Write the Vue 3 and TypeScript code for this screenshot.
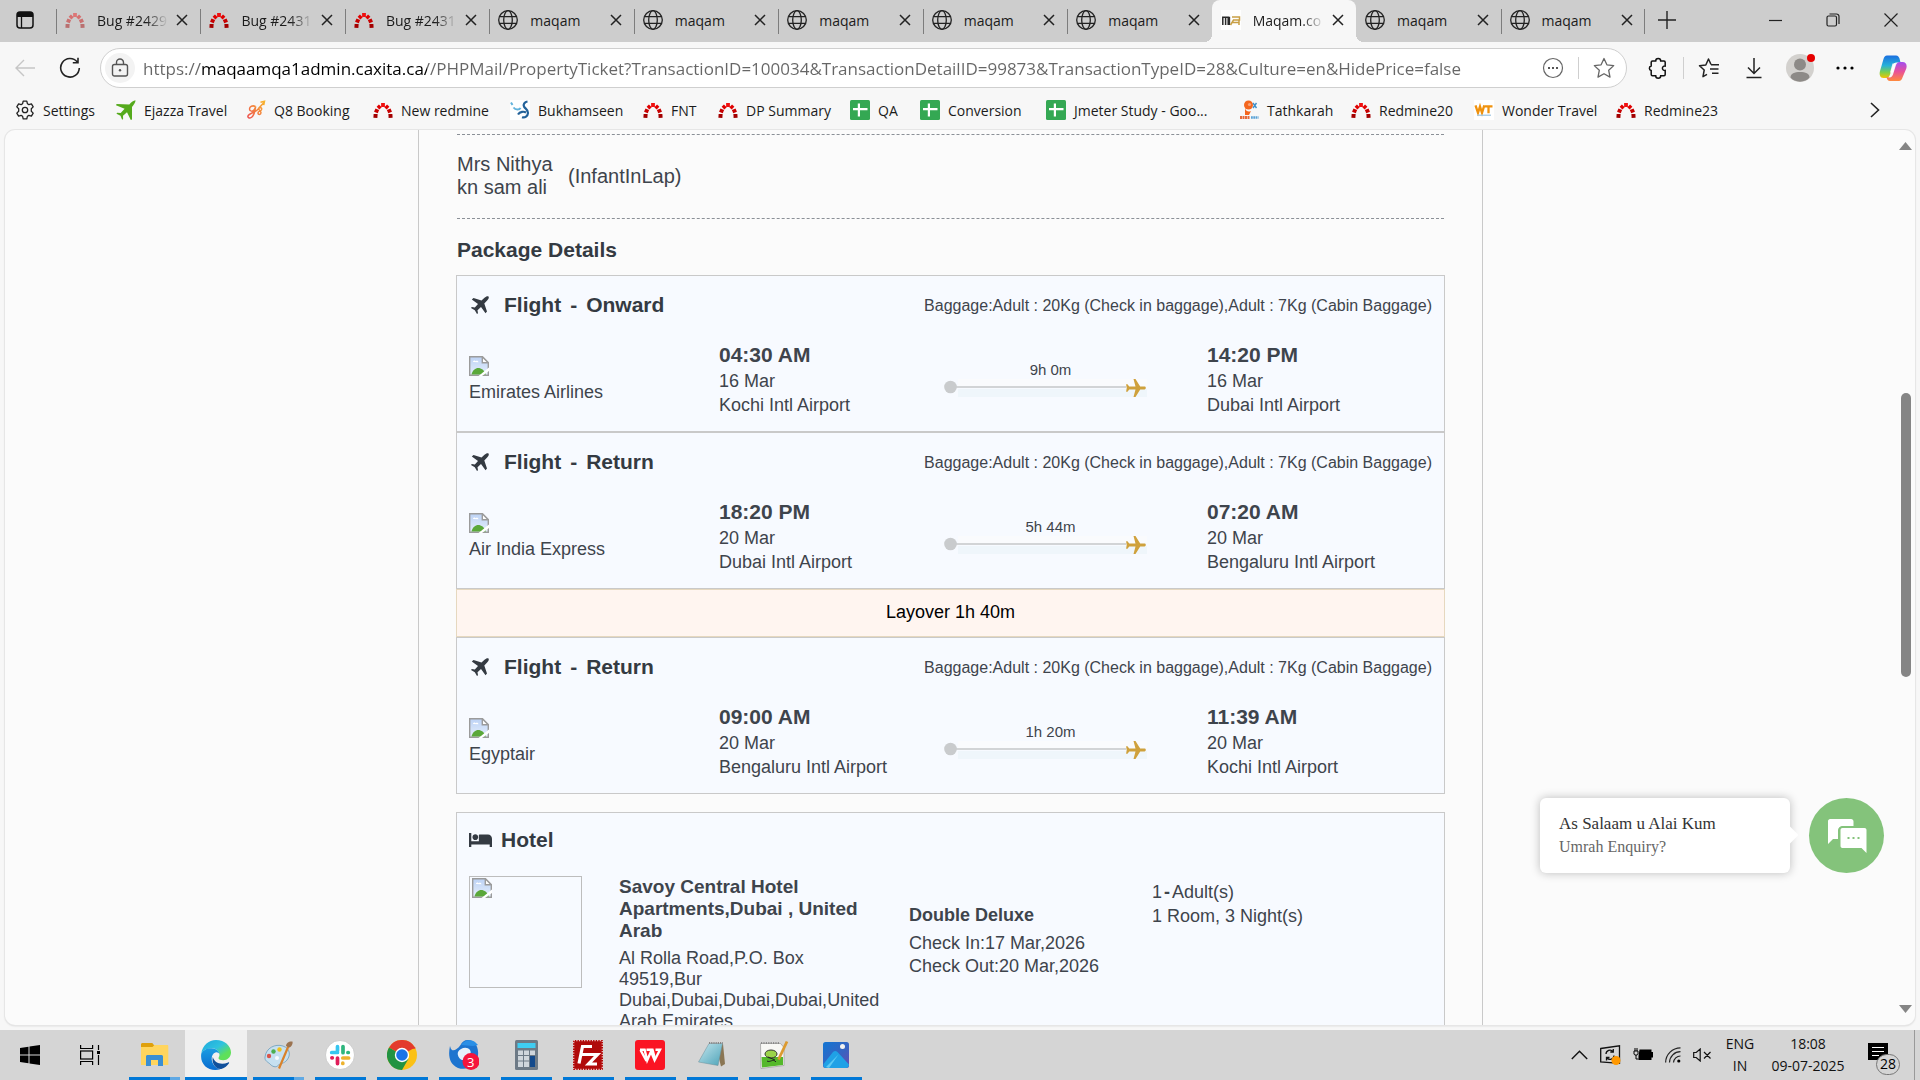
<script setup lang="ts">
interface Tab { title: string; icon: string; faded?: boolean; active?: boolean }
interface Bookmark { label: string; icon: string }
interface Stop { time: string; date: string; place: string }
interface Flight { title: string; airline: string; duration: string; from: Stop; to: Stop; layover?: string }
interface TaskApp { name: string; icon: string; active?: boolean; stacked?: boolean }

const tabs: Tab[] = [
  { title: 'Bug #2429', icon: 'redmine', faded: true },
  { title: 'Bug #2431', icon: 'redmine' },
  { title: 'Bug #2431', icon: 'redmine' },
  { title: 'maqam', icon: 'globe' },
  { title: 'maqam', icon: 'globe' },
  { title: 'maqam', icon: 'globe' },
  { title: 'maqam', icon: 'globe' },
  { title: 'maqam', icon: 'globe' },
  { title: 'Maqam.co', icon: 'maqam', active: true },
  { title: 'maqam', icon: 'globe' },
  { title: 'maqam', icon: 'globe' },
]

const url = 'https://maqaamqa1admin.caxita.ca//PHPMail/PropertyTicket?TransactionID=100034&TransactionDetailID=99873&TransactionTypeID=28&Culture=en&HidePrice=false'

const bookmarks: Bookmark[] = [
  { label: 'Settings', icon: 'gear' },
  { label: 'Ejazza Travel', icon: 'ejazza' },
  { label: 'Q8 Booking', icon: 'q8' },
  { label: 'New redmine', icon: 'redmine' },
  { label: 'Bukhamseen', icon: 'bukh' },
  { label: 'FNT', icon: 'redmine' },
  { label: 'DP Summary', icon: 'redmine' },
  { label: 'QA', icon: 'sheet' },
  { label: 'Conversion', icon: 'sheet' },
  { label: 'Jmeter Study - Goo...', icon: 'sheet' },
  { label: 'Tathkarah', icon: 'tath' },
  { label: 'Redmine20', icon: 'redmine' },
  { label: 'Wonder Travel', icon: 'wt' },
  { label: 'Redmine23', icon: 'redmine' },
]

const baggage = 'Baggage:Adult : 20Kg (Check in baggage),Adult : 7Kg (Cabin Baggage)'

const flights: Flight[] = [
  {
    title: 'Onward', airline: 'Emirates Airlines', duration: '9h 0m',
    from: { time: '04:30 AM', date: '16 Mar', place: 'Kochi Intl Airport' },
    to: { time: '14:20 PM', date: '16 Mar', place: 'Dubai Intl Airport' },
  },
  {
    title: 'Return', airline: 'Air India Express', duration: '5h 44m', layover: 'Layover 1h 40m',
    from: { time: '18:20 PM', date: '20 Mar', place: 'Dubai Intl Airport' },
    to: { time: '07:20 AM', date: '20 Mar', place: 'Bengaluru Intl Airport' },
  },
  {
    title: 'Return', airline: 'Egyptair', duration: '1h 20m',
    from: { time: '09:00 AM', date: '20 Mar', place: 'Bengaluru Intl Airport' },
    to: { time: '11:39 AM', date: '20 Mar', place: 'Kochi Intl Airport' },
  },
]

const apps: TaskApp[] = [
  { name: 'File Explorer', icon: 'explorer', stacked: true },
  { name: 'Edge', icon: 'edge', active: true },
  { name: 'Paint', icon: 'paint', stacked: true },
  { name: 'Slack', icon: 'slack' },
  { name: 'Chrome', icon: 'chrome' },
  { name: 'Thunderbird', icon: 'bird' },
  { name: 'Calculator', icon: 'calc' },
  { name: 'FileZilla', icon: 'fz' },
  { name: 'WPS Office', icon: 'wps' },
  { name: 'Notepad', icon: 'notepad' },
  { name: 'Notepad++', icon: 'npp' },
  { name: 'Photos', icon: 'photos' },
]
</script>

<template>
  <div class="desktop">
    <svg class="defs" aria-hidden="true">
      <defs>
        <linearGradient id="g-edge" x1="0" y1="0" x2="1" y2="1"><stop offset="0" stop-color="#1ea7dd" /><stop offset=".45" stop-color="#2fc2df" /><stop offset=".75" stop-color="#5fe05a" /></linearGradient>
        <linearGradient id="g-edge2" x1="0" y1="0" x2="0" y2="1"><stop offset="0" stop-color="#1b9de2" /><stop offset="1" stop-color="#0a6cd0" /></linearGradient>
        <linearGradient id="g-photo" x1="0" y1="0" x2="1" y2="1"><stop offset="0" stop-color="#1276d3" /><stop offset=".6" stop-color="#3a62c0" /><stop offset="1" stop-color="#6a4bb0" /></linearGradient>
        <linearGradient id="g-note" x1="0" y1="0" x2="1" y2="1"><stop offset="0" stop-color="#c4e6ee" /><stop offset="1" stop-color="#4da3b8" /></linearGradient>
        <linearGradient id="g-cop1" x1="0" y1="0" x2="0" y2="1"><stop offset="0" stop-color="#1b6fe0" /><stop offset=".45" stop-color="#27b2d8" /><stop offset=".75" stop-color="#7fd04a" /><stop offset="1" stop-color="#f4c400" /></linearGradient>
        <linearGradient id="g-cop2" x1="0" y1="0" x2="0" y2="1"><stop offset="0" stop-color="#a24ff0" /><stop offset=".5" stop-color="#e8519a" /><stop offset="1" stop-color="#ff8a3c" /></linearGradient>
        <linearGradient id="g-q8" x1="0" y1="1" x2="1" y2="0"><stop offset="0" stop-color="#ee4f4f" /><stop offset="1" stop-color="#f8b62c" /></linearGradient>
        <linearGradient id="g-sky" x1="0" y1="0" x2="0" y2="1"><stop offset="0" stop-color="#bcd2f5" /><stop offset="1" stop-color="#e6effc" /></linearGradient>
      </defs>
      <symbol id="i-redmine" viewBox="0 0 20 20">
        <g fill="none" stroke-width="4">
          <path d="M2.4 17.9 2.6 14" stroke="#a30000" /><path d="M2.9 12.6 4.3 9.2" stroke="#c80000" />
          <path d="M5 8.1 7.3 5.9" stroke="#e00000" /><path d="M8.1 5h3.8" stroke="#f01010" />
          <path d="M12.7 5.9 15 8.1" stroke="#e00000" /><path d="M15.7 9.2 17.1 12.6" stroke="#c80000" /><path d="M17.4 14 17.6 17.9" stroke="#a30000" />
        </g>
      </symbol>
      <symbol id="i-globe" viewBox="0 0 20 20">
        <g fill="none" stroke="#222" stroke-width="1.3"><circle cx="10" cy="10" r="9.3" /><ellipse cx="10" cy="10" rx="4.3" ry="9.3" /><path d="M1.5 6.7h17M1.5 13.3h17" /></g>
      </symbol>
      <symbol id="i-maqam" viewBox="0 0 20 20">
        <rect width="20" height="20" fill="#fff" />
        <path d="M1.8 15V7.2h5.4V15M4.6 7.2V15M8.4 15V6.8" fill="none" stroke="#2b2b2b" stroke-width="1.5" />
        <path d="M9.5 15l3-5h6v-3h-7.5M18 10v5M11.5 12.5h6.5" fill="none" stroke="#c9a045" stroke-width="1.5" />
      </symbol>
      <symbol id="i-gear" viewBox="0 0 20 20">
        <path d="M8.2 1.2h3.6l.6 2.5 1.5.9 2.5-.8 1.8 3.1-1.9 1.8v2.6l1.9 1.8-1.8 3.1-2.5-.8-1.5.9-.6 2.5H8.2l-.6-2.5-1.5-.9-2.5.8-1.8-3.1 1.9-1.8V8.7L1.8 6.9l1.8-3.1 2.5.8 1.5-.9z" fill="none" stroke="#222" stroke-width="1.3" stroke-linejoin="round" />
        <circle cx="10" cy="10" r="2.7" fill="none" stroke="#222" stroke-width="1.3" />
      </symbol>
      <symbol id="i-ejazza" viewBox="0 0 20 20"><path d="M19.5.3c-2 .2-4 1.9-6.2 4.2L.6 4.1 0 5.3l8.6 3.5-3.9 4.3-3.6-.3-.6 1 4 1.9 1.6 4 1-.6-.1-3.3 4-3.6L14.8 20l1.2-.6V6.9c1.9-2.3 3.5-4.3 3.5-6.6z" fill="#55aa1c" /></symbol>
      <symbol id="i-q8" viewBox="0 0 20 20">
        <path d="M9.5 6.5c-3-1.500-6 0-6 2.500s3.500 3 5 .5l1.200-3c-.5 4-1.500 9-4.500 11-2 1.300-4-.2-3-2 1.500-2.500 7-2.500 10.500-7 1.500-1.800 3.500-.5 2.800 1.200-.8 1.700-3.500 1.300-3.500 3.300s2.800 1.800 3-.2c.2-1.800-2.500-2-2.200-4.600L18 2.500M14.500 2.200l4-1-.8 4" fill="none" stroke="url(#g-q8)" stroke-width="1.500" />
      </symbol>
      <symbol id="i-bukh" viewBox="0 0 20 20">
        <rect width="20" height="20" fill="#fff" />
        <path d="M1 2.500 2.500 5M3.500 7.500c2 2.500 6 2.500 7 .3" fill="none" stroke="#62b3dc" stroke-width="2" />
        <path d="M17.500 1.500c-3 .5-4.500 3-3.500 5 1 2.300 4.200 3 4 6.500-.2 3-3 5.200-6 4.200M8 14.500c2-3.200 6-3.200 8-2" fill="none" stroke="#25639a" stroke-width="2.200" />
      </symbol>
      <symbol id="i-sheet" viewBox="0 0 20 20"><rect width="20" height="20" rx="1.500" fill="#34a853" /><path d="M8.900 3.500v13M3 9.200h14.500" stroke="#fff" stroke-width="2.200" /></symbol>
      <symbol id="i-tath" viewBox="0 0 20 20">
        <circle cx="9.500" cy="5" r="4.500" fill="#f4661e" /><path d="M6 8c1 4 4 4 6 3l-2 4H6z" fill="#f4661e" /><circle cx="10.500" cy="4.500" r="1.600" fill="#fff" opacity=".4" />
        <path d="M14 3l3.500 5M17.500 3 14 8" stroke="#3e8fc9" stroke-width="1.400" /><path d="M1 17.500h10" stroke="#e66a3a" stroke-width="3" stroke-dasharray="2 .5" /><path d="M12 17.500h7.500" stroke="#5aa2d6" stroke-width="2.500" stroke-dasharray="1.800 .5" />
      </symbol>
      <symbol id="i-wt" viewBox="0 0 20 20">
        <rect width="20" height="20" fill="#fff" />
        <path d="M1.500 5.300 4 12.800 6 6.500l2 6.300 2.300-7.500M10.500 6.300h8M14.500 6.300v7" fill="none" stroke="#f0920e" stroke-width="2.300" /><path d="M3 15.200h14" stroke="#9cc4e0" stroke-width="1.200" />
      </symbol>
      <symbol id="i-broken" viewBox="0 0 20 20">
        <path d="M.7.7h12.600L19.300 6.700v12.600H.7z" fill="url(#g-sky)" stroke="#9b9b9b" stroke-width="1.400" />
        <path d="M4 6c0-1.500 2-2 2.500-.8C8 4.200 9.500 5 9.500 6.200z" fill="#fff" /><path d="M2.500 18.600c2-8.500 11-9 14.500 0z" fill="#5aa83a" />
        <path d="M13.300.7v6h6z" fill="#fff" stroke="#9b9b9b" stroke-width="1.400" /><path d="M20 11.500 9.500 20H13l7-5z" fill="#fff" />
      </symbol>
      <symbol id="i-plane" viewBox="0 0 18 18"><path d="M17.500.5c-1-.8-2.600 0-4 1.300l-3 2.800L2.500 2 .8 3.500 7 8l-3.200 3.500-3-.5L0 12l3.800 2.200L6 18l1-.8-.5-3L10 11l4.500 6.300 1.500-1.800-2.700-8 2.800-3c1.300-1.400 2.200-3 1.400-4z" fill="#343a42" /></symbol>
      <symbol id="i-bed" viewBox="0 64 640 384"><path d="M176 256c44 0 80-36 80-80s-36-80-80-80-80 36-80 80 36 80 80 80zm352-150H290c-9 0-16 7-16 16v166H64V64H0v384h64v-64h512v64h64V218c0-62-50-112-112-112z" fill="#343a42" /></symbol>

      <symbol id="i-explorer" viewBox="0 0 30 30"><path d="M2 4.500C2 3.600 2.600 3 3.500 3h9.800l2 2.500H27V9H2z" fill="#dfa00c" /><path d="M2 7h11.500l2-2H28.300c.6 0 1 .5 1 1V25H2z" fill="#ffd55e" /><path d="M7 26v-9.500c0-1 .8-1.500 1.500-1.500h14c1 0 1.500.8 1.500 1.500V26h-5v-6h-7v6z" fill="#3b8fd3" /></symbol>
      <symbol id="i-edge" viewBox="0 0 30 30">
        <path d="M.3 13.500C1.500 5.500 7.500 0 15 0c8.800 0 15 6 15 12.500 0 4.500-3.500 7.700-7.800 7.700-2.600 0-4.700-.8-4.700-2 0-1 1-1.500 1-3.400 0-3-3-6.600-8-6.600C5.500 8.200 2 10.500.3 13.500z" fill="url(#g-edge)" />
        <path d="M.3 13.500C2 10 6 8 10.500 8.200c4 .2 7.500 2.500 8 6-.8-1.400-2.500-2.200-4-1.700-3 1-4.500 4.500-3.500 8.500 1 4.200 4.500 7.500 8.500 8.200C8 32.500-1.500 24.500.3 13.500z" fill="url(#g-edge2)" />
        <path d="M11.800 17c-1.500 6.500 3 12.500 8.500 12 3.500-1 6-3.200 7.700-5.800.4-.6-.1-1.100-.8-.8C20 25.500 13.500 23 11.800 17z" fill="#10509c" />
      </symbol>
      <symbol id="i-paint" viewBox="0 0 30 30">
        <path d="M2 17C3 8 12 3.500 20 6c7 2.500 8 9 4 14-3 4-7 3-9 5.500-2 2.500-6 1-8-1.500-2-2-5.500-3-5-7z" fill="#c6e0f0" stroke="#7fa9c4" />
        <circle cx="6" cy="16" r="2.200" fill="#d9534a" /><circle cx="10.500" cy="11.500" r="2.200" fill="#4caf50" /><circle cx="16.500" cy="9.500" r="2.200" fill="#f2c21c" /><circle cx="14" cy="18" r="2" fill="#f8fbfd" />
        <path d="M16 28.500 25.500 6" stroke="#d9822b" stroke-width="2.200" /><path d="M23 6c0-3 3-5 6.500-4.500C30 4 28.500 7 26 7.500z" fill="#9b7350" />
      </symbol>
      <symbol id="i-slack" viewBox="0 0 30 30"><circle cx="15" cy="15" r="14.500" fill="#fff" stroke="#bbb" stroke-width=".6" />
        <g stroke-width="3.700" stroke-linecap="round"><path d="M12.500 6.700v4.200M6.700 12.500h5.800" stroke="#36c5f0" /><path d="M18 6.500v6.200M23.300 12.500h-.4" stroke="#2eb67d" /><path d="M17.800 18h5.800M17.800 23.200v.3" stroke="#ecb22e" /><path d="M12.500 18v5.600M6.900 17.800h.4" stroke="#e01e5a" /></g></symbol>
      <symbol id="i-chrome" viewBox="0 0 30 30"><circle cx="15" cy="15" r="15" fill="#fbc116" /><path d="M15 15 2 7.500A15 15 0 0 1 28 7.500z" fill="#e33b2e" /><path d="M2 7.500A15 15 0 0 0 15 30l6.500-11.300L15 15z" fill="#229342" /><path d="M15 8h13.300" stroke="#e33b2e" stroke-width="1.500" /><circle cx="15" cy="15" r="7.200" fill="#fff" /><circle cx="15" cy="15" r="5.800" fill="#1a73e8" /></symbol>
      <symbol id="i-bird" viewBox="0 0 30 30">
        <path d="M1 6c-2 9-1 18 8 22 9 3 20-2 20-13C30 6 25 0 19 0c-4 0-6 2-7.500 5C9 9 5 11 3 10c-1-1-1.500-2-2-4z" fill="#1d74cf" /><path d="M12 5c3-5 10-6 14-3l3 3-5 1z" fill="#2a8fe6" /><path d="M9 12c2-4 9-6 12-2 3 5-4 11-8 10-3-1-5-5-4-8z" fill="#e6f1fb" />
        <circle cx="22" cy="21.500" r="8.500" fill="#f5143c" />
      </symbol>
      <symbol id="i-calc" viewBox="0 0 30 30"><rect x="4" width="23" height="30" rx="1.500" fill="#6d7a86" /><rect x="6.500" y="3" width="18" height="5" fill="#3fcdf2" /><path d="M7 10.500h5v4.500H7zm6 0h5v4.500h-5zm6 0h5v4.500h-5zM7 16h5v4.500H7zm6 0h5v4.500h-5zM7 21.500h5V27H7zm6 0h5V27h-5z" fill="#cfd6dc" /><path d="M19 16h5v11h-5z" fill="#134a8c" /></symbol>
      <symbol id="i-fz" viewBox="0 0 30 30"><rect width="30" height="30" fill="#b00a0a" /><rect x=".7" y=".7" width="28.600" height="28.600" fill="none" stroke="#fff" stroke-width="1.200" stroke-dasharray="1.200 1.400" opacity=".8" /><path d="M6 23.500 9.500 6.500h9.500M8 14.500h8M16 14.500h8.500L15.500 24H24" fill="none" stroke="#fff" stroke-width="3.200" /></symbol>
      <symbol id="i-wps" viewBox="0 0 30 30"><rect width="30" height="30" rx="3" fill="#fa1423" /><path d="M5 9.700h4.600l2.600 10.500L16 11.500l3.600 8.700 5.400-10.500h-4.500" fill="none" stroke="#fff" stroke-width="2.400" /><path d="M5.500 10l6 11M11.500 9.700h6l2.500 9" fill="none" stroke="#fff" stroke-width="2.400" /></symbol>
      <symbol id="i-notepad" viewBox="0 0 30 30"><path d="M26 4l2 20-4 2.500L19 6z" fill="#8a7654" /><path d="M12 3.500h13.500L21 25.500 1.500 22z" fill="url(#g-note)" stroke="#6d8e98" stroke-width=".5" /><path d="M12 3h14" stroke="#888" stroke-width="2" stroke-dasharray="1.200 1" /></symbol>
      <symbol id="i-npp" viewBox="0 0 30 30"><path d="M1.500 3.500h20l3.500 4v18l-23 3z" fill="#f7f7f4" stroke="#999" stroke-width=".7" /><path d="M2.500 17H24v8L3 27.500z" fill="#54b82a" /><ellipse cx="12" cy="14" rx="6" ry="4" fill="#9bd44a" stroke="#333" /><path d="M8 21c3 2 6-3 9 1M9 17l7 3" fill="none" stroke="#222" /><path d="M19.500 19.500 28 1.500" stroke="#dc9a30" stroke-width="2.800" /><path d="M2 3h18" stroke="#777" stroke-width="1.500" stroke-dasharray="1.200 1.200" /></symbol>
      <symbol id="i-photos" viewBox="0 0 30 30"><rect x="2" y="2" width="26" height="26" rx="2.500" fill="url(#g-photo)" /><path d="M2.500 24 12 12c1.500-1.500 3-1.500 4.500 0L28 24.500c0 2-1 3.500-3 3.500H5c-2 0-3-2-2.500-4z" fill="#1fa1e6" /><path d="M8 28 17.500 14.500 5 27z" fill="#5ccaf5" /><circle cx="21.500" cy="6.500" r="2.500" fill="#f2f2f2" /></symbol>
    </svg>

    <header class="tabstrip">
      <button class="tab-actions" aria-label="Tab actions">
        <svg width="18" height="18" viewBox="0 0 18 18"><rect x="1" y="1" width="16" height="16" rx="3" fill="none" stroke="#111" stroke-width="1.500" /><path d="M1 6V4a3 3 0 0 1 3-3h10a3 3 0 0 1 3 3v2z" fill="#111" /><path d="M5.500 5v12" stroke="#111" stroke-width="1.300" /></svg>
      </button>
      <nav class="tabs">
        <div v-for="(t, i) in tabs" :key="i" class="tab" :class="{ active: t.active, 'no-line': i === 9 }">
          <svg class="favicon" :class="{ faded: t.faded }"><use :href="'#i-' + t.icon" /></svg>
          <span class="tab-title" :class="{ fade: t.icon !== 'globe' }">{{ t.title }}</span>
          <button class="tab-close" :aria-label="'Close ' + t.title"><svg width="12" height="12" viewBox="0 0 12 12"><path d="M1 1l10 10M11 1 1 11" stroke="#222" stroke-width="1.500" /></svg></button>
        </div>
      </nav>
      <div class="strip-end">
        <button aria-label="New tab"><svg width="18" height="18" viewBox="0 0 18 18"><path d="M9 0v18M0 9h18" stroke="#222" stroke-width="1.400" /></svg></button>
        <div class="window-buttons">
          <button aria-label="Minimise"><svg width="13" height="13" viewBox="0 0 13 13"><path d="M0 6.500h13" stroke="#222" stroke-width="1.200" /></svg></button>
          <button aria-label="Restore"><svg width="14" height="14" viewBox="0 0 14 14"><g fill="none" stroke="#222" stroke-width="1.200"><rect x="1" y="3" width="9.500" height="10" rx="1.500" /><path d="M3.500 1h7a2.500 2.500 0 0 1 2.500 2.500V11" /></g></svg></button>
          <button aria-label="Close window"><svg width="14" height="14" viewBox="0 0 14 14"><path d="M.5.5l13 13M13.500.5l-13 13" stroke="#222" stroke-width="1.200" /></svg></button>
        </div>
      </div>
    </header>

    <div class="toolbar">
      <button class="back" aria-label="Back"><svg width="20" height="18" viewBox="0 0 20 18"><path d="M9 1 1 9l8 8M1 9h19" fill="none" stroke="#c6c6c6" stroke-width="1.400" /></svg></button>
      <button class="reload" aria-label="Reload"><svg width="22" height="22" viewBox="0 0 22 22"><path d="M18.300 5A9.300 9.300 0 1 0 20.300 11M19 .8V5.800h-5.200" fill="none" stroke="#222" stroke-width="1.600" /></svg></button>
      <div class="address">
        <button class="lock" aria-label="Site information"><svg width="18" height="20" viewBox="0 0 18 20"><g fill="none" stroke="#555" stroke-width="1.400"><rect x="1.500" y="6.500" width="15" height="11.500" rx="2" /><path d="M5.500 6.500V4.500a3.500 3.500 0 0 1 7 0v2" /></g><circle cx="9" cy="12.200" r="1.200" fill="#555" /></svg></button>
        <input class="url" type="text" aria-label="Address" :value="url" />
        <button class="more-circle" aria-label="Page options"><svg width="22" height="22" viewBox="0 0 22 22"><circle cx="11" cy="11" r="9.500" fill="none" stroke="#666" stroke-width="1.200" /><path d="M6 11h2M10 11h2M14 11h2" stroke="#555" stroke-width="2" /></svg></button>
        <span class="bar"></span>
        <button aria-label="Add favourite"><svg width="22" height="22" viewBox="0 0 22 22"><path d="M11 1.500l2.900 6.300 6.800.8-5 4.700 1.300 6.800-6-3.400-6 3.400 1.300-6.800-5-4.700 6.800-.8z" fill="none" stroke="#666" stroke-width="1.300" stroke-linejoin="round" /></svg></button>
      </div>
      <div class="tools">
        <button aria-label="Extensions"><svg width="22" height="22" viewBox="0 0 22 22"><path d="M5.500 4h3.200a2.500 2.500 0 0 1 5 0H17c.8 0 1.200.5 1.200 1.200V9a2.300 2.300 0 1 0 0 4.500v4c0 .8-.5 1.200-1.200 1.200h-3.300a2.500 2.500 0 0 1-5 0H5.500c-.8 0-1.300-.5-1.300-1.200v-4a2.300 2.300 0 0 1 0-4.500V5.200C4.200 4.500 4.700 4 5.500 4z" fill="none" stroke="#111" stroke-width="1.500" /></svg></button>
        <span class="bar"></span>
        <button aria-label="Favourites"><svg width="22" height="22" viewBox="0 0 22 22"><path d="M13 7.500 10.500 2 7.800 8 1.500 8.700 6.200 13 5 19.700l4-2.300M13 7.700h8M12 12h8.500M14 16.300h6.500" fill="none" stroke="#222" stroke-width="1.500" stroke-linejoin="round" /></svg></button>
        <button aria-label="Downloads"><svg width="18" height="22" viewBox="0 0 18 22"><path d="M9 1v15.500M3 10.500l6 6 6-6M1.500 20.500h15" fill="none" stroke="#222" stroke-width="1.500" /></svg></button>
        <button class="avatar" aria-label="Profile"><svg width="30" height="30" viewBox="0 0 30 30"><circle cx="14" cy="15" r="14" fill="#d3d1ce" /><circle cx="14" cy="11.500" r="6" fill="#8d8a87" /><path d="M4.500 24.500c0-4 4-5.500 9.500-5.500s9.500 1.500 9.500 5.500C20 30 8 30 4.500 24.500z" fill="#8d8a87" /><circle cx="25" cy="5" r="4" fill="#e60000" /></svg></button>
        <button aria-label="Menu"><svg width="18" height="4" viewBox="0 0 18 4"><circle cx="2" cy="2" r="1.600" /><circle cx="9" cy="2" r="1.600" /><circle cx="16" cy="2" r="1.600" /></svg></button>
        <button aria-label="Copilot"><svg width="28" height="28" viewBox="0 0 28 28"><path d="M8 1.500h9c2 0 3 1.500 3.500 3l1 4h-4c-2 0-3 1-3.700 3l-2.800 9c-.7 2.500-2 3.500-4 3.500H4.500C1 24 0 20.500 1 17L4.500 5C5.200 2.800 6.200 1.500 8 1.500z" fill="url(#g-cop1)" /><path d="M20 27h-9c-2 0-3-1.500-3.500-4l3 .5c2 0 3-1.500 3.500-3l2.800-9c.7-2.300 2-3.500 4-3.500h2.700c3.500 0 4.800 3 3.800 6.500L23.500 23.500C22.800 25.700 21.800 27 20 27z" fill="url(#g-cop2)" /><path d="M13.500 9.500h3l-2.500 9h-3z" fill="#fff" opacity=".85" /></svg></button>
      </div>
    </div>

    <nav class="bookmarks">
      <a v-for="b in bookmarks" :key="b.label" class="bookmark" href="#"><svg class="favicon"><use :href="'#i-' + b.icon" /></svg>{{ b.label }}</a>
      <button class="overflow" aria-label="More bookmarks"><svg width="10" height="16" viewBox="0 0 10 16"><path d="M1 1l7.500 7L1 15" fill="none" stroke="#222" stroke-width="1.600" /></svg></button>
    </nav>

    <div class="viewport">
      <div class="page">
        <main class="sheet">
          <section class="passenger">
            <span class="passenger-name">Mrs Nithya kn sam ali</span>
            <span>(InfantInLap)</span>
          </section>
          <h2 class="section-title">Package Details</h2>
          <template v-for="(f, i) in flights" :key="i">
            <article class="card">
              <div class="card-head">
                <h3 class="card-title flight-title">
                  <svg class="plane-icon"><use href="#i-plane" /></svg>
                  <span>Flight</span><span>-</span><span>{{ f.title }}</span>
                </h3>
                <span class="baggage">{{ baggage }}</span>
              </div>
              <div class="legs">
                <div class="airline"><svg class="broken"><use href="#i-broken" /></svg><span>{{ f.airline }}</span></div>
                <div><strong class="time">{{ f.from.time }}</strong><p>{{ f.from.date }}</p><p>{{ f.from.place }}</p></div>
                <div class="track">
                  <span class="duration">{{ f.duration }}</span>
                  <svg width="203" height="18" viewBox="0 0 203 18"><rect x="14" y="10" width="189" height="8" fill="#eff6fb" /><rect x="14" y="0" width="189" height="7" fill="#fafbfd" /><path d="M12 8h170" stroke="#d2d4d6" stroke-width="2" /><circle cx="6.500" cy="8" r="6.300" fill="#c9cbcd" />
                    <path d="M189.500 0h2l4.700 7.600h4.300c1.800 0 1.800 2.800 0 2.800h-4.300L191.500 18h-2l2-7.600h-6.300l-1.700 2.400h-1.400l.6-3.800-.6-3.800h1.400l1.700 2.400h6.300z" fill="#cfa13c" /></svg>
                </div>
                <div><strong class="time">{{ f.to.time }}</strong><p>{{ f.to.date }}</p><p>{{ f.to.place }}</p></div>
              </div>
            </article>
            <div v-if="f.layover" class="layover">{{ f.layover }}</div>
          </template>

          <article class="card hotel">
            <h3 class="card-title hotel-title"><svg class="bed-icon"><use href="#i-bed" /></svg>Hotel</h3>
            <div class="stay">
              <div class="photo"><svg class="broken"><use href="#i-broken" /></svg></div>
              <div class="place"><strong class="hotel-name">Savoy Central Hotel Apartments,Dubai , United Arab</strong><p class="street">Al Rolla Road,P.O. Box 49519,Bur Dubai,Dubai,Dubai,Dubai,United Arab Emirates</p></div>
              <div class="room"><strong>Double Deluxe</strong><p>Check In:17 Mar,2026</p><p>Check Out:20 Mar,2026</p></div>
              <div class="guests"><p>1<b>-</b>Adult(s)</p><p>1 Room, 3 Night(s)</p></div>
            </div>
          </article>
        </main>
      </div>
      <div class="scrollbar">
        <svg width="13" height="8" viewBox="0 0 13 8"><path d="M0 8 6.500 0 13 8z" fill="#858585" /></svg>
        <div class="rail"><div class="thumb"></div></div>
        <svg width="13" height="8" viewBox="0 0 13 8"><path d="M0 0 6.500 8 13 0z" fill="#858585" /></svg>
      </div>
      <aside class="chat">
        <div class="chat-bubble"><p class="greeting">As Salaam u Alai Kum</p><p class="enquiry">Umrah Enquiry?</p></div>
        <button class="chat-button" aria-label="Open chat"><svg width="40" height="36" viewBox="0 0 40 36"><path d="M3 1h21c1.500 0 2.500 1 2.500 2.500V8H16c-3 0-5 1.500-5 5v8H6l-5 5V3C1 2 2 1 3 1z" fill="#fff" /><path d="M15.500 10h22c1.200 0 2 .8 2 2v23l-5-5h-19c-1.200 0-2-.8-2-2V12c0-1.200.8-2 2-2z" fill="#fff" /><path d="M20.500 20h2M25.500 20h2M30.500 20h2" stroke="#84c37b" stroke-width="2" /></svg></button>
      </aside>
    </div>

    <footer class="taskbar">
      <button class="sys" aria-label="Start"><svg width="20" height="20" viewBox="0 0 20 20"><path d="M0 3 8.500 1.700v7.800H0zM9.500 1.500 20 0v9.500H9.500zM0 10.500h8.500v7.800L0 17zM9.500 10.500H20V20L9.500 18.500z" /></svg></button>
      <button class="sys" aria-label="Task view"><svg width="20" height="20" viewBox="0 0 20 20"><g fill="none" stroke="#000" stroke-width="1.200"><path d="M.6 0v3.500h12V0M.6 20v-3.500h12V20M18.500 0v5M18.500 10v10" /><rect x=".6" y="6" width="12" height="8" /></g><rect x="17" y="6" width="3" height="3" /></svg></button>
      <button v-for="a in apps" :key="a.name" class="app" :class="{ active: a.active, stacked: a.stacked }" :aria-label="a.name">
        <svg class="app-icon"><use :href="'#i-' + a.icon" /></svg>
        <span v-if="a.icon === 'bird'" class="count">3</span>
      </button>
      <div class="tray">
        <svg width="17" height="10" viewBox="0 0 17 10"><path d="M.8 9 8.500 1.200 16.200 9" fill="none" stroke="#111" stroke-width="1.400" /></svg>
        <svg width="21" height="20" viewBox="0 0 21 20"><path d="M.7 3.500 19.500.8v17.500L.7 17z" fill="none" stroke="#111" stroke-width="1.300" /><path d="M6 9a4 4 0 0 1 7-2.500M13.300 4v3h-3M14 10.500A4 4 0 0 1 7 13M6.500 15.500v-3h3" fill="none" stroke="#111" stroke-width="1.300" /><circle cx="16" cy="15.500" r="4.500" fill="#ff9800" /></svg>
        <svg width="20" height="14" viewBox="0 0 20 14"><path d="M1 3h4v3c0 1.500-4 1.500-4 0zM2 3V0M4 3V0M3 7v4h2.500" fill="none" stroke="#000" /><path d="M6.500 1.500h12v2.500h1.500v5.500h-1.500v2.500h-13V8z" /></svg>
        <svg width="16" height="16" viewBox="0 0 16 16"><g fill="none" stroke="#222" stroke-width="1.200"><path d="M.6 15.500A15 15 0 0 1 15.500.8M4.500 15.500A11 11 0 0 1 15.500 4.700M8.500 15.500a7 7 0 0 1 7-6.500" /></g><circle cx="13.800" cy="14" r="1.600" /></svg>
        <svg width="18" height="14" viewBox="0 0 18 14"><path d="M.7 4.500v5h2.500l4 3.500V1l-4 3.500zM11 4l6.500 6.500M17.500 4 11 10.500" fill="none" stroke="#111" stroke-width="1.200" /></svg>
      </div>
      <div class="lang"><span>ENG</span><span>IN</span></div>
      <div class="clock"><span>18:08</span><span>09-07-2025</span></div>
      <button class="notices" aria-label="Notifications"><svg width="20" height="20" viewBox="0 0 20 20"><path d="M0 0h20v17h-7l-3 3v-3H0z" /><path d="M4 4.500h12M4 8.500h12M4 12.500h7" stroke="#fff" stroke-width="1.200" /></svg><span class="badge">28</span></button>
    </footer>
  </div>
</template>

<style>
body { margin: 0; overflow: hidden; }
</style>

<style scoped>
* { box-sizing: border-box; }
p, h2, h3 { margin: 0; }
button { display: flex; align-items: center; justify-content: center; padding: 0; border: 0; background: none; font: inherit; }
svg { display: block; flex: none; }
.defs { position: absolute; width: 0; height: 0; }
.desktop { display: flex; flex-direction: column; height: 100vh; background: #f7f7f7; color: #1b1b1b; font-family: "Open Sans", "Noto Sans", sans-serif; font-size: 14px; }

.tabstrip { display: flex; height: 42px; flex: none; background: #cdcdcd; }
.tab-actions { width: 56px; padding: 0 6px 0 0; height: 40px; }
.tabs { display: flex; flex: 1; min-width: 0; }
.tab { position: relative; display: flex; flex: 1; min-width: 0; align-items: center; padding: 0 12px 2px 9px; }
.tab::before { content: ""; position: absolute; left: 0; top: 9px; width: 1px; height: 25px; background: #7d7d7d; }
.tab.no-line::before { display: none; }
.tab:last-child::after { content: ""; position: absolute; right: 0; top: 9px; width: 1px; height: 25px; background: #7d7d7d; }
.tab.active { background: #f7f7f7; border-radius: 8px 8px 0 0; }
.tab.active::before, .tab.active::after { content: ""; position: absolute; top: auto; bottom: 0; width: 8px; height: 8px; }
.tab.active::before { left: -8px; background: radial-gradient(circle at 0 0, transparent 8px, #f7f7f7 8px); }
.tab.active::after { right: -8px; background: radial-gradient(circle at 100% 0, transparent 8px, #f7f7f7 8px); }
.favicon { width: 20px; height: 20px; }
.favicon.faded { opacity: .45; }
.tab-title { flex: 1; min-width: 0; margin: 0 4px 0 12px; white-space: nowrap; font-size: 14px; }
.tab-title.fade { -webkit-mask-image: linear-gradient(to right, #000 65%, transparent 95%); mask-image: linear-gradient(to right, #000 65%, transparent 95%); }
.strip-end { display: flex; width: 275px; height: 40px; justify-content: space-between; padding: 0 0 0 13px; }
.window-buttons { display: flex; }
.window-buttons button { width: 58px; }

.toolbar { display: flex; height: 52px; flex: none; align-items: center; padding: 0 13px 0 15px; }
.reload { margin-left: 24px; }
.address { display: flex; flex: 1; height: 40px; align-items: center; margin-left: 19px; padding: 0 11px 0 4px; border: 1px solid #cfcfcf; border-radius: 20px; background: #fff; }
.lock { width: 30px; height: 30px; border-radius: 50%; background: #f3f3f3; }
.url { flex: 1; min-width: 0; margin: 0 8px; padding: 0; border: 0; outline: 0; font: 17px "Open Sans", "Noto Sans", sans-serif; color: transparent; background: linear-gradient(to right, #666 58px, #000 58px, #000 284px, #666 284px); -webkit-background-clip: text; background-clip: text; }
.bar { width: 1px; height: 22px; background: #cfcfcf; }
.address .bar { margin: 0 14px; }
.tools { display: flex; align-items: center; }
.tools .bar { margin: 0 14px; }
.tools .bar + button { margin-left: 0; }
.tools button + button { margin-left: 25px; }
.tools button:first-child { margin-left: 20px; }
.tools button + .avatar { margin-left: 23px; }
.tools .avatar + button { margin-left: 20px; }

.bookmarks { display: grid; grid-template-columns: 101px 130px 127px 137px 133px 75px 132px 70px 126px 193px 112px 123px 142px 1fr auto; height: 35px; flex: none; align-items: center; padding: 0 40px 3px 15px; }
.bookmark { display: flex; gap: 8px; align-items: center; color: inherit; text-decoration: none; white-space: nowrap; font-size: 14px; }

.viewport { position: relative; display: flex; flex: 1; min-height: 0; margin: 1px 5px 5px; overflow: hidden; border-radius: 10px; background: #fbfbfb; box-shadow: 0 0 0 1px #e6e6e6, 0 1px 2px #ccc; }
.page { flex: 1; min-width: 0; font-family: "Liberation Sans", Arial, sans-serif; font-size: 18px; line-height: 24px; color: #3e444c; }
.sheet { max-width: 1065px; margin: 0 auto; padding: 4px 37px 0; border: 1px solid #c9c9c9; border-width: 0 1px; }
.passenger { display: flex; gap: 13px; align-items: center; margin: 0 1px; padding: 18px 0 19px; border: 1px dashed #8b9097; border-width: 1px 0; font-size: 20px; line-height: 23px; }
.passenger-name { width: 98px; }
.section-title { margin: 17px 1px 11px; font-size: 21px; line-height: 28px; color: #343a42; }
.card { padding: 15px 12px 14px; border: 1px solid #c9c9c9; background: #f7faff; }
.card-head { display: flex; justify-content: space-between; align-items: center; }
.card-title { display: flex; align-items: center; font-size: 21px; line-height: 28px; color: #343a42; }
.flight-title { gap: 9px; padding-left: 2px; }
.plane-icon { width: 18px; height: 18px; margin-right: 6px; }
.baggage { padding-top: 1px; font-size: 16px; line-height: 27px; }
.legs { display: grid; grid-template-columns: 250fr 225fr 263fr 225fr; margin-top: 22px; }
.airline { display: flex; flex-direction: column; gap: 4px; padding-top: 15px; }
.broken { width: 20px; height: 20px; }
.time { display: block; font-size: 21px; line-height: 28px; }
.track { width: 203px; padding-top: 20px; }
.duration { display: block; padding-left: 10px; text-align: center; font-size: 15px; line-height: 18px; }
.layover { padding-bottom: 2px; border: 1px solid #e6d8bf; background: #fff5f0; color: #000; text-align: center; line-height: 44px; }
.hotel { margin-top: 18px; padding-top: 13px; }
.hotel-title { gap: 9px; }
.bed-icon { width: 23px; height: 16px; }
.stay { display: grid; grid-template-columns: 150fr 290fr 243fr 280fr; margin-top: 22px; }
.photo { width: 113px; height: 112px; padding: 1px 2px; border: 1px solid #bdbdbd; }
.place { max-width: 262px; }
.hotel-name { display: block; font-size: 19px; line-height: 22px; }
.street { margin-top: 6px; line-height: 21px; }
.room { padding-top: 27px; line-height: 23px; }
.room strong { display: block; margin-bottom: 5px; line-height: 24px; }
.guests { padding-top: 4px; }
.guests b { padding: 0 2px; }

.scrollbar { display: flex; flex-direction: column; width: 19px; align-items: center; padding: 12px 0; }
.rail { display: grid; flex: 1; grid-template-rows: 243fr 284fr 328fr; }
.thumb { grid-row: 2; width: 10px; border-radius: 5px; background: #858585; }

.chat { position: absolute; right: 31px; bottom: 152px; display: flex; gap: 19px; align-items: center; }
.chat-bubble { position: relative; width: 250px; height: 75px; padding: 15px 19px; border-radius: 6px; background: #fff; box-shadow: 0 0 10px #bbb; font-family: "Liberation Serif", "Times New Roman", serif; }
.chat-bubble::after { content: ""; position: absolute; right: -6px; top: 31px; width: 12px; height: 12px; background: #fff; transform: rotate(45deg); }
.greeting { font-size: 17px; line-height: 22px; color: #333; }
.enquiry { font-size: 16px; line-height: 24px; color: #666; }
.chat-button { width: 75px; height: 75px; border-radius: 50%; background: #84c37b; }

.taskbar { display: flex; height: 50px; flex: none; background: #d5d5d5; color: #111; }
.sys { width: 60px; }
.app { position: relative; width: 62px; }
.sys + .app { margin-left: 3px; }
.app.active { background: #f0f0f0; }
.app::after { content: ""; position: absolute; left: 6px; right: 5px; bottom: 0; height: 3px; background: #0078d7; }
.app.active::after { left: 0; right: 0; }
.app.stacked::after { background: linear-gradient(to right, #0078d7 80%, #60a9e4 80%); }
.app-icon { width: 30px; height: 30px; }
.count { position: absolute; left: 34px; top: 22px; color: #fff; font-size: 13px; line-height: 20px; }
.tray { display: flex; flex: 1; gap: 12px; align-items: center; justify-content: flex-end; }
.lang, .clock { display: flex; flex-direction: column; justify-content: center; text-align: center; line-height: 22px; }
.lang { width: 58px; }
.clock { width: 78px; padding-bottom: 1px; }
.notices { position: relative; width: 68px; margin-right: 5px; border-right: 1px solid #999; padding: 0 5px 4px 0; }
.badge { position: absolute; left: 29px; top: 24px; width: 24px; height: 21px; border: 1px solid #777; border-radius: 11px; background: #d5d5d5; font-size: 14px; line-height: 18px; }
</style>
